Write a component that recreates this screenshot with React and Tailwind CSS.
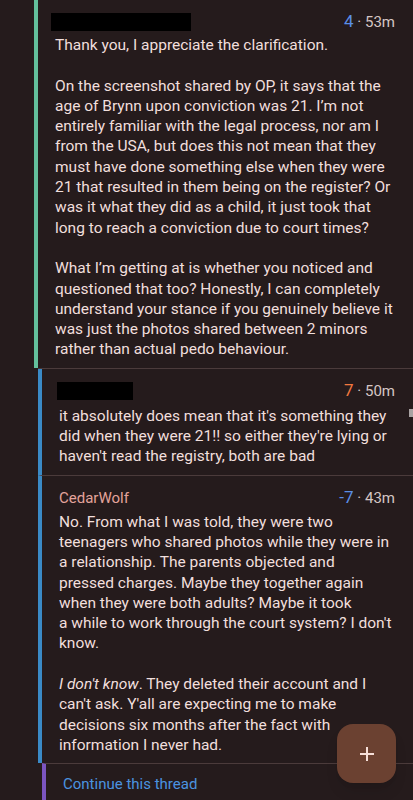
import React from "react";

const Header = ({ name, redactWidth, score, scoreColor, time, nameShift }) => (
  <div className="flex items-center justify-between h-5">
    {name ? (
      <span className="text-[15px] text-[#e3a39b]">{name}</span>
    ) : (
      <span className={`block h-[18px] bg-black ${nameShift}`} style={{ width: redactWidth }} />
    )}
    <span className="text-[15px] text-[#d6c6c4]">
      <span className={`text-[17px] ${scoreColor}`}>{score}</span> · {time}
    </span>
  </div>
);

export default function App() {
  return (
    <div className="relative h-[800px] overflow-hidden bg-[#251b1c] text-[#f1dfdd] font-['Roboto',sans-serif] text-[15.5px] leading-[20.3px]">
      <div className="ml-[34px] border-l-4 border-[#63c09c] pl-[17px] pr-[18px] pt-3 pb-2">
        <Header redactWidth={140} nameShift="-ml-1" score="4" scoreColor="text-[#5b8ee6]" time="53m" />
        <div className="mt-[3px] space-y-[20.3px]">
          <p>Thank you, I appreciate the clarification.</p>
          <p>
            On the screenshot shared by OP, it says that the age of Brynn upon conviction was 21. I’m not entirely
            familiar with the legal process, nor am I from the USA, but does this not mean that they must have done
            something else when they were 21 that resulted in them being on the register? Or was it what they did as
            a child, it just took that long to reach a conviction due to court times?
          </p>
          <p>
            What I’m getting at is whether you noticed and questioned that too? Honestly, I can completely understand
            your stance if you genuinely believe it was just the photos shared between 2 minors rather than actual
            pedo behaviour.
          </p>
        </div>
      </div>

      <div className="ml-[38px] border-t border-[#4b3b3b]">
        <div className="border-l-4 border-[#3a8ac6] pl-[17px] pr-[18px] pt-3 pb-2">
          <Header redactWidth={76} nameShift="-ml-[2px]" score="7" scoreColor="text-[#f2783f]" time="50m" />
          <p className="mt-[5px]">
            it absolutely does mean that it's something they did when they were 21!! so either they're lying or
            haven't read the registry, both are bad
          </p>
        </div>
        <div className="border-t border-[#4b3b3b] border-l-4 border-l-[#3a8ac6] pl-[17px] pr-[18px] pt-3 pb-2">
          <Header name="CedarWolf" score="-7" scoreColor="text-[#5b8ee6]" time="43m" />
          <div className="mt-1 -mr-1 space-y-[20.3px]">
            <p>
              No. From what I was told, they were two teenagers who shared photos while they were in a relationship.
              The parents objected and
              <br />
              pressed charges. Maybe they together again
              <br />
              when they were both adults? Maybe it took
              <br />
              a while to work through the court system? I don't know.
            </p>
            <p>
              <em>I don't know</em>. They deleted their account and I can't ask. Y'all are expecting me to make
              decisions six months after the fact with information I never had.
            </p>
          </div>
        </div>
      </div>

      <div className="ml-[42px] border-t border-[#4b3b3b] border-l-4 border-l-[#7b55c0] pl-[17px] pt-[10px] h-[60px]">
        <span className="text-[15px] text-[#4b93e0]">Continue this thread</span>
      </div>

      <div className="absolute right-0 top-[409px] w-1 h-2 bg-[#a9a3a3]" />

      <button className="absolute right-[17px] top-[724px] w-[59px] h-[59px] rounded-2xl bg-[#6b4131] shadow-lg flex items-center justify-center">
        <svg width="16" height="16" viewBox="0 0 16 16">
          <path d="M8 1v14M1 8h14" stroke="#f6dfd8" strokeWidth="2" />
        </svg>
      </button>
    </div>
  );
}
